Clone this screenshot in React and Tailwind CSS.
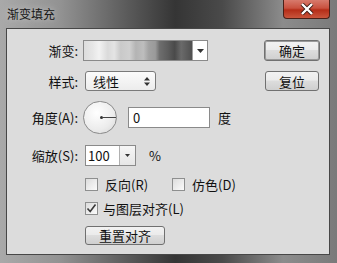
import React from 'react';

const font = { fontFamily: '"Noto Sans CJK SC", "Liberation Sans", sans-serif' };

const Checkbox = ({ checked }) => (
  <div className="w-[13px] h-[13px] border border-[#8e8f8f] bg-[linear-gradient(135deg,#dcdcdc,#fbfbfb)] flex items-center justify-center shrink-0">
    {checked && (
      <svg width="11" height="11" viewBox="0 0 11 11">
        <path d="M1.5 5.5 L4.2 8.5 L9.5 1.5" fill="none" stroke="#3a3a3a" strokeWidth="1.6" />
      </svg>
    )}
  </div>
);

const Button = ({ children, className = '' }) => (
  <div
    className={`flex items-center justify-center rounded-[3px] border border-[#707070] bg-[linear-gradient(#f2f2f2,#ebebeb_45%,#dddddd_50%,#cfcfcf)] text-[13px] leading-none text-[#111] ${className}`}
  >
    {children}
  </div>
);

const Label = ({ children }) => (
  <div className="w-[72px] pr-[1px] text-right text-[13px] leading-none text-[#111] shrink-0">{children}</div>
);

export default function App() {
  return (
    <div
      className="w-[337px] h-[263px] flex flex-col bg-[linear-gradient(90deg,#a9a9a9_0%,#929292_18%,#5a5a5a_38%,#353535_52%,#4a4a4a_66%,#8c8c8c_84%,#7a7a7a_100%)]"
      style={font}
    >
      {/* Title bar */}
      <div className="h-[28px] flex items-start shrink-0 relative">
        <div className="pl-[7px] pt-[8px] text-[12px] leading-none text-[#151515] [text-shadow:0_0_6px_#d0d0d0]">
          渐变填充
        </div>
        <div className="absolute left-[283px] top-0 w-[47px] h-[19px] rounded-b-[4px] border border-t-0 border-[#4a2018] bg-[linear-gradient(#d77a6c,#c9513f_45%,#b52d18_55%,#c9553c)] flex items-center justify-center">
          <svg width="14" height="12" viewBox="0 0 14 12">
            <path d="M2 1 L12 11 M12 1 L2 11" stroke="#3a1a14" strokeWidth="4" />
            <path d="M2 1 L12 11 M12 1 L2 11" stroke="#ffffff" strokeWidth="2.4" />
          </svg>
        </div>
      </div>

      {/* Client area */}
      <div className="flex-1 ml-[6px] mr-[7px] mb-[8px] border border-[#474747] bg-[#dcdcdc] flex">
        <div className="flex flex-col pt-[11px]">
          {/* Gradient */}
          <div className="flex items-center">
            <Label>渐变:</Label>
            <div className="ml-[4px] h-[21px] w-[125px] border border-[#8a8a8a] bg-white flex">
              <div className="w-[109px] h-full border-r border-[#a0a0a0] bg-[linear-gradient(90deg,#dcdcdc_0%,#e6e6e6_8%,#f2f2f2_14%,#dadada_22%,#e4e4e4_28%,#c9c9c9_34%,#d0d0d0_42%,#b4b4b4_48%,#bdbdbd_55%,#a2a2a2_60%,#9a9a9a_66%,#6e6e6e_70%,#5c5c5c_78%,#4a4a4a_84%,#6a6a6a_90%,#505050_100%)]" />
              <div className="flex-1 flex items-center justify-center">
                <svg width="7" height="4" viewBox="0 0 7 4">
                  <path d="M0 0 L7 0 L3.5 4 Z" fill="#333" />
                </svg>
              </div>
            </div>
          </div>

          {/* Style */}
          <div className="flex items-center mt-[10px]">
            <Label>样式:</Label>
            <div className="ml-[6px] h-[20px] w-[71px] rounded-[3px] border border-[#7a7a7a] bg-[linear-gradient(#fbfbfb,#ececec)] flex items-center pl-[7px] pr-[5px]">
              <span className="text-[13px] leading-none text-[#111]">线性</span>
              <svg className="ml-auto" width="6" height="9" viewBox="0 0 6 9">
                <path d="M0 3.5 L3 0 L6 3.5 Z M0 5.5 L6 5.5 L3 9 Z" fill="#333" />
              </svg>
            </div>
          </div>

          {/* Angle */}
          <div className="flex items-center mt-[10px]">
            <Label>角度(A):</Label>
            <div className="ml-[4px] w-[34px] h-[33px] rounded-full border border-[#8a8a8a] bg-[radial-gradient(circle_at_40%_35%,#ffffff,#ececec_60%,#d4d4d4)] flex items-center">
              <div className="ml-[16px] w-[3px] h-[3px] rounded-full bg-[#333]" />
              <div className="w-[13px] h-[1.5px] bg-[#444]" />
            </div>
            <div className="ml-[11px] w-[82px] h-[21px] border border-[#8a8a8a] bg-white flex items-center pl-[4px] text-[13px] leading-none text-[#111]">
              0
            </div>
            <div className="ml-[8px] text-[13px] leading-none text-[#111]">度</div>
          </div>

          {/* Scale */}
          <div className="flex items-center mt-[11px]">
            <Label>缩放(S):</Label>
            <div className="ml-[6px] h-[21px] w-[51px] border border-[#8a8a8a] bg-white flex">
              <div className="w-[34px] h-full border-r border-[#b0b0b0] flex items-center pl-[2px] text-[13px] leading-none text-[#111]">
                100
              </div>
              <div className="flex-1 flex items-center justify-center bg-[linear-gradient(#f6f6f6,#e6e6e6)]">
                <svg width="5" height="3" viewBox="0 0 5 3">
                  <path d="M0 0 L5 0 L2.5 3 Z" fill="#333" />
                </svg>
              </div>
            </div>
            <div className="ml-[13px] text-[13px] leading-none text-[#111]">%</div>
          </div>

          {/* Options */}
          <div className="flex items-center mt-[12px] pl-[78px]">
            <Checkbox />
            <span className="ml-[7px] text-[13px] leading-none text-[#111]">反向(R)</span>
            <div className="ml-[24px]">
              <Checkbox />
            </div>
            <span className="ml-[7px] text-[13px] leading-none text-[#111]">仿色(D)</span>
          </div>
          <div className="flex items-center mt-[11px] pl-[78px]">
            <Checkbox checked />
            <span className="ml-[5px] text-[13px] leading-none text-[#111]">与图层对齐(L)</span>
          </div>

          <div className="mt-[11px] pl-[78px]">
            <Button className="w-[80px] h-[19px]">重置对齐</Button>
          </div>
        </div>

        {/* Right buttons */}
        <div className="ml-auto mr-[9px] pt-[11px] flex flex-col items-end">
          <Button className="w-[56px] h-[21px] border-[#3c3c3c] shadow-[inset_0_0_0_1px_#9a9a9a]">确定</Button>
          <Button className="mt-[10px] mr-[1px] w-[54px] h-[20px]">复位</Button>
        </div>
      </div>
    </div>
  );
}
